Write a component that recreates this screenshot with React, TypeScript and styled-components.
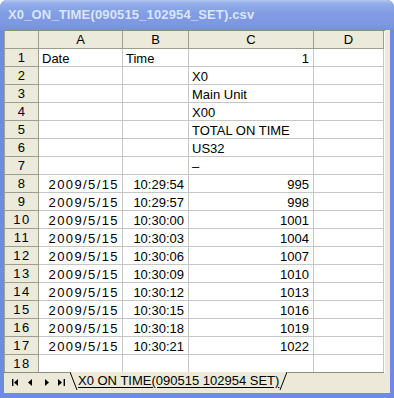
import styled, { createGlobalStyle } from 'styled-components';

const GlobalStyle = createGlobalStyle`
  html, body {
    margin: 0;
    padding: 0;
    background: #ffffff;
    overflow: hidden;
  }
  body {
    font-family: "Liberation Sans", Arial, sans-serif;
  }
`;

type Align = 'left' | 'right';

interface SheetRow {
  a?: string;
  b?: string;
  c?: string;
  aAlign?: Align;
  bAlign?: Align;
  cAlign?: Align;
  spaced?: boolean;
}

const dataRows: [string, string, string][] = [
  ['2009/5/15', '10:29:54', '995'],
  ['2009/5/15', '10:29:57', '998'],
  ['2009/5/15', '10:30:00', '1001'],
  ['2009/5/15', '10:30:03', '1004'],
  ['2009/5/15', '10:30:06', '1007'],
  ['2009/5/15', '10:30:09', '1010'],
  ['2009/5/15', '10:30:12', '1013'],
  ['2009/5/15', '10:30:15', '1016'],
  ['2009/5/15', '10:30:18', '1019'],
  ['2009/5/15', '10:30:21', '1022'],
];

const rows: SheetRow[] = [
  { a: 'Date', b: 'Time', c: '1', aAlign: 'left', bAlign: 'left', cAlign: 'right' },
  { c: 'X0', cAlign: 'left' },
  { c: 'Main Unit', cAlign: 'left' },
  { c: 'X00', cAlign: 'left' },
  { c: 'TOTAL ON TIME', cAlign: 'left' },
  { c: 'US32', cAlign: 'left' },
  { c: '\u2013', cAlign: 'left' },
  ...dataRows.map(([a, b, c]) => ({
    a,
    b,
    c,
    aAlign: 'right' as Align,
    bAlign: 'right' as Align,
    cAlign: 'right' as Align,
    spaced: true,
  })),
  {},
];

const columns = ['A', 'B', 'C', 'D'];

const FirstIcon = () => (
  <svg width="7" height="7" viewBox="0 0 7 7">
    <rect x="0" y="0" width="1.4" height="7" fill="#000" />
    <polygon points="6,0 2,3.5 6,7" fill="#000" />
  </svg>
);

const PrevIcon = () => (
  <svg width="5" height="7" viewBox="0 0 5 7">
    <polygon points="4,0 0,3.5 4,7" fill="#000" />
  </svg>
);

const NextIcon = () => (
  <svg width="5" height="7" viewBox="0 0 5 7">
    <polygon points="1,0 5,3.5 1,7" fill="#000" />
  </svg>
);

const LastIcon = () => (
  <svg width="7" height="7" viewBox="0 0 7 7">
    <polygon points="0,0 4,3.5 0,7" fill="#000" />
    <rect x="5.6" y="0" width="1.4" height="7" fill="#000" />
  </svg>
);

const App = () => {
  return (
    <>
      <GlobalStyle />
      <Window>
        <TitleBar>X0_ON_TIME(090515_102954_SET).csv</TitleBar>
        <Body>
          <Sheet>
            <Corner />
            {columns.map((col) => (
              <ColHeader key={col}>{col}</ColHeader>
            ))}
            {rows.map((row, i) => (
              <Row key={i}>
                <RowHeader>{i + 1}</RowHeader>
                <Cell $align={row.aAlign} $spaced={row.spaced}>
                  {row.a}
                </Cell>
                <Cell $align={row.bAlign}>{row.b}</Cell>
                <Cell $align={row.cAlign}>{row.c}</Cell>
                <Cell />
              </Row>
            ))}
          </Sheet>
          <TabBar>
            <NavButtons>
              <NavButton>
                <FirstIcon />
              </NavButton>
              <NavButton>
                <PrevIcon />
              </NavButton>
              <NavButton>
                <NextIcon />
              </NavButton>
              <NavButton>
                <LastIcon />
              </NavButton>
            </NavButtons>
            <Tab>
              <svg width="9" height="19" viewBox="0 0 9 19">
                <line x1="1" y1="0" x2="8" y2="18" stroke="#000" strokeWidth="1" />
              </svg>
              <TabLabel>X0 ON TIME(090515 102954 SET)</TabLabel>
              <svg width="9" height="19" viewBox="0 0 9 19">
                <line x1="1" y1="18" x2="8" y2="0" stroke="#000" strokeWidth="1" />
              </svg>
            </Tab>
            <TabRest />
          </TabBar>
        </Body>
      </Window>
    </>
  );
};

export default App;

const Window = styled.div`
  width: 394px;
  height: 398px;
  display: flex;
  flex-direction: column;
  background: #6f8be0;
  border-radius: 7px 7px 0 0;
  overflow: hidden;
`;

const TitleBar = styled.div`
  height: 30px;
  flex: none;
  box-sizing: border-box;
  padding: 7px 0 0 8px;
  background: linear-gradient(to bottom, #b3c6f3 0%, #93ade9 12%, #819de3 45%, #7d98e1 80%, #7591de 100%);
  color: #dbe5f8;
  font-family: "Liberation Sans", Arial, sans-serif;
  font-weight: bold;
  font-size: 13px;
  letter-spacing: 0.15px;
  white-space: nowrap;
`;

const Body = styled.div`
  flex: 1;
  display: flex;
  flex-direction: column;
  margin: 0 4px 5px 4px;
  background: #ece9d8;
  min-height: 0;
`;

const Sheet = styled.div`
  display: grid;
  grid-template-columns: 34px 84px 66px 125px 70px;
  grid-auto-rows: 18px;
  width: 380px;
  border-top: 1px solid #8d8d80;
  border-left: 1px solid #a0a0a0;
  background: #ffffff;
  overflow: hidden;
`;

const Row = styled.div`
  display: contents;
`;

const HeaderBase = styled.div`
  box-sizing: border-box;
  background: #ebeadb;
  border-right: 1px solid #9d9d90;
  border-bottom: 1px solid #9d9d90;
  color: #000;
  font-size: 13px;
  line-height: 17px;
  text-align: center;
`;

const Corner = styled(HeaderBase)``;

const ColHeader = styled(HeaderBase)``;

const RowHeader = styled(HeaderBase)`
  letter-spacing: 1.5px;
  padding-left: 1px;
`;

const Cell = styled.div<{ $align?: Align; $spaced?: boolean }>`
  box-sizing: border-box;
  border-right: 1px solid #c6c6c6;
  border-bottom: 1px solid #c6c6c6;
  padding: 1px 4px 0 3px;
  font-size: 13px;
  line-height: 17px;
  color: #000;
  white-space: nowrap;
  overflow: visible;
  text-align: ${(p) => p.$align ?? 'left'};
  letter-spacing: ${(p) => (p.$spaced ? '1.4px' : '0')};
  padding-right: ${(p) => (p.$spaced ? '3px' : '4px')};
`;

const TabBar = styled.div`
  flex: 1;
  display: flex;
  align-items: flex-start;
  background: #ece9d8;
  width: 380px;
  min-height: 0;
`;

const NavButtons = styled.div`
  display: flex;
  align-items: center;
  height: 19px;
  padding-left: 4px;
  border-top: 1px solid #8d8d80;
  margin-top: -1px;
  box-sizing: border-box;
  width: 65px;
  flex: none;
`;

const NavButton = styled.div`
  width: 16px;
  height: 18px;
  display: flex;
  align-items: center;
  justify-content: center;
`;

const Tab = styled.div`
  display: flex;
  align-items: flex-start;
  height: 19px;
  background: #ece9d8;
  margin-top: -1px;
  flex: none;
`;

const TabLabel = styled.div`
  font-size: 13px;
  line-height: 16px;
  padding-top: 1px;
  color: #000;
  text-decoration: underline;
  text-underline-offset: 2px;
  white-space: nowrap;
`;

const TabRest = styled.div`
  flex: 1;
  height: 19px;
  margin-top: -1px;
  border-top: 1px solid #8d8d80;
  box-sizing: border-box;
`;
